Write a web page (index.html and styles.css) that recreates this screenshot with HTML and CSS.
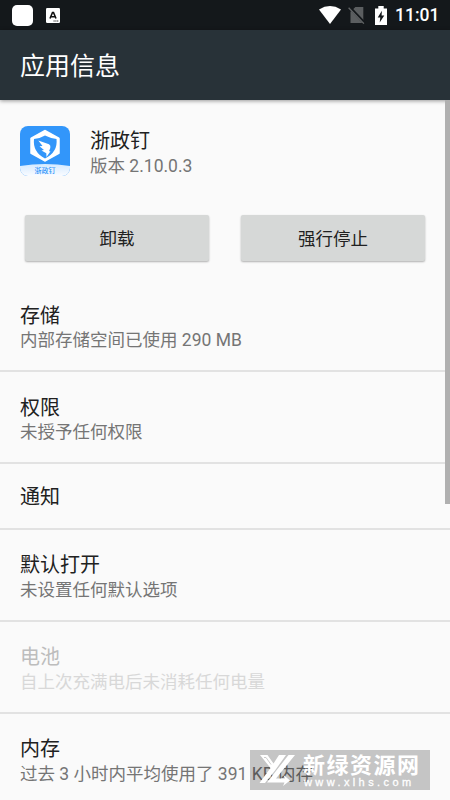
FILE: index.html
```html
<!DOCTYPE html>
<html lang="zh-CN">
<head>
<meta charset="utf-8">
<title>应用信息</title>
<link rel="stylesheet" href="styles.css">
</head>
<body>
<div class="screen">
  <div class="status">
    <span class="blob"></span>
    <svg class="input-icon" width="14" height="15" viewBox="0 0 14 15"><rect width="14" height="15" rx="1.2" fill="#fff"/><path d="M4 10.500 6.500 4.500H7.500L10 10.500M5.200 8.700h3.600" fill="none" stroke="#111" stroke-width="1.600"/><path d="M7.500 13h5" stroke="#222" stroke-width="1" stroke-dasharray="1.2 .6"/></svg>
    <span class="spacer"></span>
    <svg class="wifi" width="22" height="18" viewBox="0 0 22 18"><path d="M0 3.400Q11-3.400 22 3.400L11 18Z" fill="#fff"/></svg>
    <svg class="sim" width="18" height="18" viewBox="0 0 18 18"><path d="M7.400 1H15.300V17H2.500V5.700Z" fill="#5b5e60"/><path d="M1.300 1 17 17.600" stroke="#14181b" stroke-width="3"/><path d="M.6 1.800 15.900 17.600" stroke="#626567" stroke-width="1.300"/></svg>
    <svg class="battery" width="12" height="19" viewBox="0 0 12 19"><path d="M0 2.500H3.300V0H8.700V2.500H12V19H0Z" fill="#fff"/><path d="M6.900 4.800 2.700 11.500H5.300L4.700 16.500 9.300 9.500H6.600Z" fill="#14181b"/></svg>
    <span class="clock">11:01</span>
  </div>
  <header class="bar">应用信息</header>
  <main class="content">
    <section class="app">
      <svg class="app-icon" width="50" height="50" viewBox="0 0 50 50">
        <defs><linearGradient id="fade" x1="0" y1="0" x2="0" y2="1"><stop offset="0" stop-color="#d4eaff"/><stop offset="1" stop-color="#fafcff"/></linearGradient><clipPath id="round"><rect width="50" height="50" rx="8"/></clipPath></defs>
        <g clip-path="url(#round)"><rect width="50" height="50" fill="#3296fa"/><path d="M0 40Q25 36 50 40V50H0Z" fill="url(#fade)"/></g>
        <path d="M25 5 38.500 12.500V27L25 34.500 11.500 27V12.500Z" fill="#fff" stroke="#fff" stroke-width="2.500" stroke-linejoin="round"/>
        <path d="M14 13Q20 12.500 25 9.500 31 12.500 36.500 13 38 26 25 32.500 12.500 26 14 13Z" fill="#3296fa"/>
        <path d="M18.300 14.500 29 18.300Q31 19.200 30.300 22L29 25.200H30.500L26.500 31 26.300 27.200 21.500 24.500 24 24 19.500 20.200 22.500 20Z" fill="#fff"/>
        <text x="25" y="46.800" text-anchor="middle" class="icon-label">浙政钉</text>
      </svg>
      <div><div class="title">浙政钉</div><div class="sub">版本 2.10.0.3</div></div>
    </section>
    <div class="actions"><button>卸载</button><button>强行停止</button></div>
    <section class="row"><div class="title">存储</div><div class="sub">内部存储空间已使用 290 MB</div></section>
    <section class="row"><div class="title">权限</div><div class="sub">未授予任何权限</div></section>
    <section class="row single"><div class="title">通知</div></section>
    <section class="row"><div class="title">默认打开</div><div class="sub">未设置任何默认选项</div></section>
    <section class="row disabled"><div class="title">电池</div><div class="sub">自上次充满电后未消耗任何电量</div></section>
    <section class="row last"><div class="title">内存</div><div class="sub">过去 3 小时内平均使用了 391 KB 内存</div></section>
  </main>
  <div class="scrollbar"></div>
  <div class="watermark">
    <svg width="34" height="31" viewBox="0 0 34 31"><path d="M0 0H7.500L13.500 8.500 19 0H26L15 15.500 5 28H-.5L10.500 13Z" fill="#fff"/><path d="M28.500 0H35L16 23.500H25L23.500 20 30 25.500 23 31 24.500 27.500H7Z" fill="#fff"/><path d="M4 2.500H6L11 9.500" fill="none" stroke="#c6c6c6" stroke-width=".9"/></svg>
    <div class="mark-text"><div class="mark-name">新绿资源网</div><div class="mark-url">www.xlhs.com</div></div>
  </div>
</div>
</body>
</html>
```
FILE: styles.css
```css
* { box-sizing: border-box; }
body { margin: 0; font-family: Roboto, "Noto Sans CJK SC", sans-serif; }
.screen { position: relative; width: 450px; height: 800px; overflow: hidden; background: #fafafa; color: #212121; }
.status { display: flex; align-items: center; height: 30px; padding: 0 11px 0 12px; background: #14181b; }
.blob { width: 21px; height: 21px; border-radius: 5px; background: #fff; }
.input-icon { margin-left: 13px; }
.spacer { flex: 1; }
.wifi { margin-right: 1px; }
.sim { margin-left: 6px; margin-right: 9px; }
.clock { width: 43px; margin-left: 8px; margin-right: 1px; color: #fff; font-size: 17.5px; font-weight: 500; line-height: 30px; white-space: nowrap; }
.bar { position: relative; height: 70px; padding-left: 20px; background: #283238; color: #fff; font-size: 25px; line-height: 74px; box-shadow: 0 1px 4px rgba(0,0,0,.4); }
.app { display: flex; gap: 20px; height: 115px; padding: 26px 20px 0; }
.app-icon { flex: none; }
.icon-label { font-size: 7px; font-weight: 500; fill: #3296fa; }
.title { font-size: 20px; line-height: 28px; padding-top: 1px; margin-bottom: -1px; white-space: nowrap; }
.app .sub { padding-top: 1px; }
.sub { font-size: 17.5px; line-height: 22px; color: #757575; white-space: nowrap; }
.actions { display: grid; grid-template-columns: 184px 184px; gap: 32px; height: 65px; padding-left: 25px; }
.actions button { height: 46px; padding: 1px 0 0; border: 0; border-radius: 2px; background: #d6d8d7; color: #212121; font: 400 17.5px/46px Roboto, "Noto Sans CJK SC", sans-serif; box-shadow: 0 1px 2px rgba(0,0,0,.3); }
.row { height: 92px; padding: 21px 20px 0; border-bottom: 2px solid #e2e2e2; }
.row.single { height: 66px; padding-top: 18px; }
.row.single ~ .row .title { padding-top: 0; margin-bottom: 0; }
.disabled .title { color: #bdbdbd; }
.disabled .sub { color: #d8d8d8; }
.row.last { border: 0; }
.scrollbar { position: absolute; right: 0; top: 100px; width: 5px; height: 404px; background: #b0b0b0; }
.watermark { position: absolute; left: 250px; top: 750px; display: flex; width: 180px; height: 40px; padding: 5px 0 0 10px; background: rgba(0,0,0,.21); color: #fff; }
.watermark svg { flex: none; overflow: visible; }
.mark-text { margin-left: 9px; margin-top: -3px; }
.mark-name { font: 700 22px/22px "Noto Sans CJK SC", sans-serif; letter-spacing: 1.5px; height: 25px; white-space: nowrap; }
.mark-url { font: 400 11px/11px "Liberation Sans", sans-serif; letter-spacing: 3.4px; padding-left: 1px; white-space: nowrap; -webkit-text-stroke: .3px #fff; }
```
